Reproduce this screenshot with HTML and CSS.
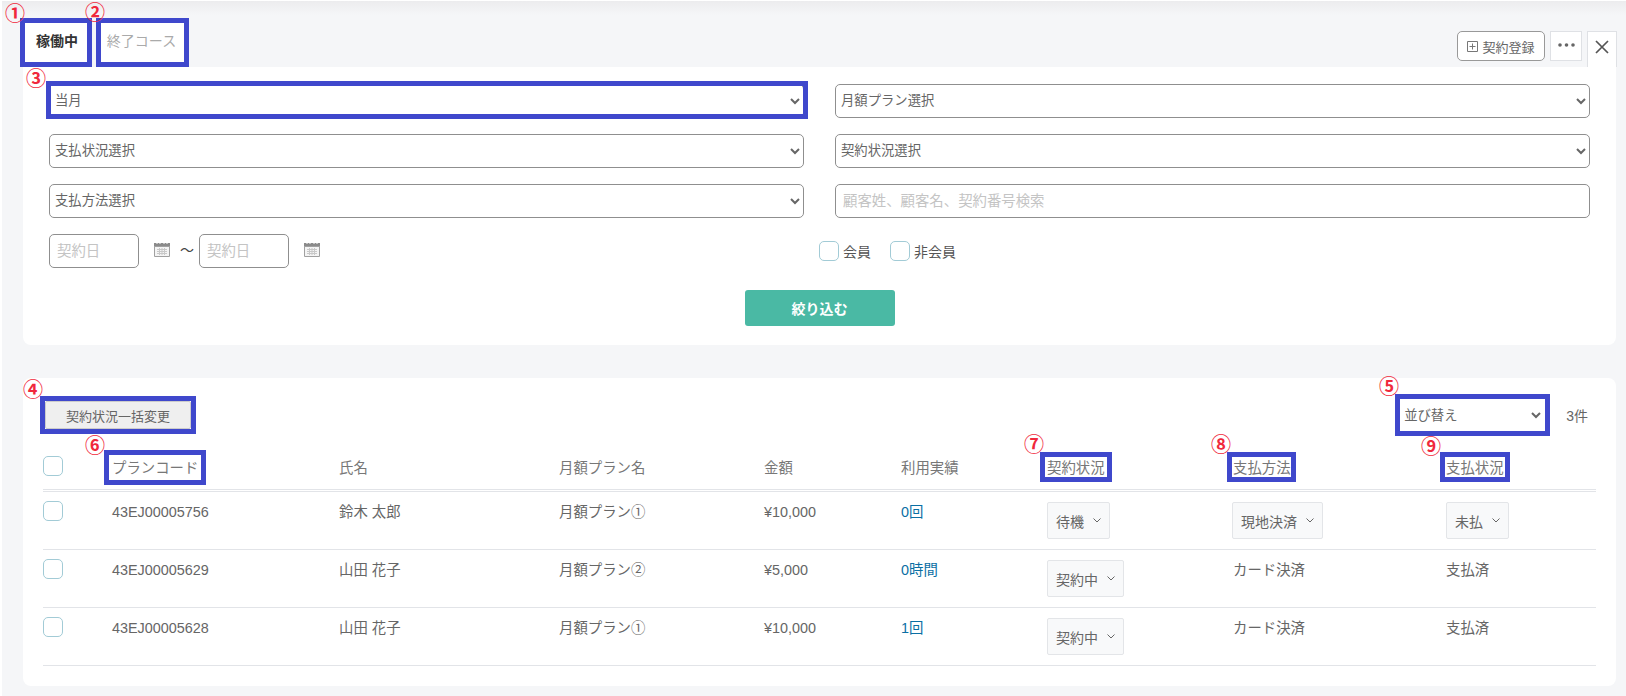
FILE: index.html
```html
<!DOCTYPE html>
<html lang="ja">
<head>
  <meta charset="UTF-8">
  <meta name="viewport" content="width=device-width, initial-scale=1.0">
  <title>月額プラン契約一覧</title>
  <link rel="stylesheet" href="styles.css">
</head>
<body>
  <div class="page">
    <!-- Tabs -->
    <div class="tab-bar">
      <div class="tab tab-active">稼働中</div>
      <div class="tab tab-off">終了コース</div>
      <div class="tab-tools">
        <button class="add-btn" type="button">
          <svg class="add-icon" width="11" height="11" viewBox="0 0 11 11"><path d="M.5.5h10v10H.5zM5.5 2.5v6M2.5 5.5h6" fill="none" stroke="#777"/></svg>
          契約登録
        </button>
        <button class="more-btn" type="button">
          <svg width="17" height="4" viewBox="0 0 17 4"><circle cx="2" cy="2" r="1.8" fill="#666"/><circle cx="8.5" cy="2" r="1.8" fill="#666"/><circle cx="15" cy="2" r="1.8" fill="#666"/></svg>
        </button>
        <button class="close-tab" type="button">
          <svg width="14" height="14" viewBox="0 0 14 14"><path d="M1 1l12 12M13 1L1 13" fill="none" stroke="#555" stroke-width="1.7"/></svg>
        </button>
      </div>
    </div>

    <!-- Filters -->
    <div class="panel filter-panel">
      <div class="filter-grid">
        <select class="field"><option>当月</option></select>
        <select class="field"><option>月額プラン選択</option></select>
        <select class="field"><option>支払状況選択</option></select>
        <select class="field"><option>契約状況選択</option></select>
        <select class="field"><option>支払方法選択</option></select>
        <input class="field search-field" type="text" placeholder="顧客姓、顧客名、契約番号検索">
        <div class="date-range">
          <input class="field date-field" type="text" placeholder="契約日">
          <svg class="cal-icon" width="16" height="15" viewBox="0 0 16 15"><path d="M0 1h16v4H0z" fill="#8a8a8a"/><path d="M.5 4.5h15v10H.5z" fill="#f4f4f4" stroke="#a0a0a0"/><path d="M3 7.5h10M3 9.5h10M3 11.5h10M5.5 6v7M8 6v7M10.5 6v7" stroke="#c8c8c8" fill="none"/><path d="M3 0v2M6 0v2M10 0v2M13 0v2" stroke="#fff" fill="none"/></svg>
          <span class="tilde">〜</span>
          <input class="field date-field" type="text" placeholder="契約日">
          <svg class="cal-icon" width="16" height="15" viewBox="0 0 16 15"><path d="M0 1h16v4H0z" fill="#8a8a8a"/><path d="M.5 4.5h15v10H.5z" fill="#f4f4f4" stroke="#a0a0a0"/><path d="M3 7.5h10M3 9.5h10M3 11.5h10M5.5 6v7M8 6v7M10.5 6v7" stroke="#c8c8c8" fill="none"/><path d="M3 0v2M6 0v2M10 0v2M13 0v2" stroke="#fff" fill="none"/></svg>
        </div>
        <div class="member-checks">
          <label class="check-label"><input class="check" type="checkbox">会員</label>
          <label class="check-label"><input class="check" type="checkbox">非会員</label>
        </div>
      </div>
      <button class="apply-btn" type="button">絞り込む</button>
    </div>

    <!-- Contract list -->
    <div class="panel list-panel">
      <div class="list-toolbar">
        <button class="bulk-btn" type="button">契約状況一括変更</button>
        <select class="sort-select"><option>並び替え</option></select>
        <span class="count">3件</span>
      </div>
      <table class="contract-table">
        <colgroup>
          <col class="c-check"><col class="c-code"><col class="c-name"><col class="c-plan"><col class="c-price">
          <col class="c-usage"><col class="c-status"><col class="c-method"><col class="c-pay">
        </colgroup>
        <thead>
          <tr>
            <th><input class="check" type="checkbox"></th>
            <th>プランコード</th>
            <th>氏名</th>
            <th>月額プラン名</th>
            <th>金額</th>
            <th>利用実績</th>
            <th>契約状況</th>
            <th>支払方法</th>
            <th>支払状況</th>
          </tr>
        </thead>
        <tbody>
          <tr>
            <td class="check-cell"><input class="check" type="checkbox"></td>
            <td>43EJ00005756</td>
            <td>鈴木 太郎</td>
            <td>月額プラン①</td>
            <td>¥10,000</td>
            <td class="usage">0回</td>
            <td><button class="drop" type="button">待機<svg width="8" height="5" viewBox="0 0 8 5"><path d="M.5.5L4 4 7.5.5" fill="none" stroke="#666"/></svg></button></td>
            <td><button class="drop drop-left" type="button">現地決済<svg width="8" height="5" viewBox="0 0 8 5"><path d="M.5.5L4 4 7.5.5" fill="none" stroke="#666"/></svg></button></td>
            <td><button class="drop" type="button">未払<svg width="8" height="5" viewBox="0 0 8 5"><path d="M.5.5L4 4 7.5.5" fill="none" stroke="#666"/></svg></button></td>
          </tr>
          <tr>
            <td class="check-cell"><input class="check" type="checkbox"></td>
            <td>43EJ00005629</td>
            <td>山田 花子</td>
            <td>月額プラン②</td>
            <td>¥5,000</td>
            <td class="usage">0時間</td>
            <td><button class="drop" type="button">契約中<svg width="8" height="5" viewBox="0 0 8 5"><path d="M.5.5L4 4 7.5.5" fill="none" stroke="#666"/></svg></button></td>
            <td>カード決済</td>
            <td>支払済</td>
          </tr>
          <tr>
            <td class="check-cell"><input class="check" type="checkbox"></td>
            <td>43EJ00005628</td>
            <td>山田 花子</td>
            <td>月額プラン①</td>
            <td>¥10,000</td>
            <td class="usage">1回</td>
            <td><button class="drop" type="button">契約中<svg width="8" height="5" viewBox="0 0 8 5"><path d="M.5.5L4 4 7.5.5" fill="none" stroke="#666"/></svg></button></td>
            <td>カード決済</td>
            <td>支払済</td>
          </tr>
        </tbody>
      </table>
    </div>
  </div>

  <!-- Manual annotations drawn over the screen -->
  <div class="frame f-1"></div>
  <div class="frame f-2"></div>
  <div class="frame f-3"></div>
  <div class="frame f-4"></div>
  <div class="frame f-5"></div>
  <div class="frame f-6"></div>
  <div class="frame f-7"></div>
  <div class="frame f-8"></div>
  <div class="frame f-9"></div>
  <span class="num n-1">①</span>
  <span class="num n-2">②</span>
  <span class="num n-3">③</span>
  <span class="num n-4">④</span>
  <span class="num n-5">⑤</span>
  <span class="num n-6">⑥</span>
  <span class="num n-7">⑦</span>
  <span class="num n-8">⑧</span>
  <span class="num n-9">⑨</span>
</body>
</html>
```

FILE: styles.css
```css
* {
  box-sizing: border-box;
}

body {
  margin: 0;
  padding: 1px 0 0 2px;
  height: 696px;
  overflow: hidden;
  background-color: #fff;
  color: #666;
  font-family: "Liberation Sans", "Noto Sans CJK JP", sans-serif;
  font-size: 14px;
}

.page {
  height: 695px;
  padding: 0 10px 0 21px;
  background: linear-gradient(#ececee, #f5f6f8 14px);
}

/* Tabs */
.tab-bar {
  display: flex;
  align-items: flex-end;
  height: 66px;
}

.tab {
  display: flex;
  align-items: center;
  justify-content: center;
  height: 39px;
  margin-bottom: 5px;
  padding-bottom: 6px;
  background-color: #fff;
}

.tab-active {
  width: 62px;
  margin-left: 2px;
  padding-left: 2px;
  color: #333;
  font-weight: 700;
}

.tab-off {
  width: 83px;
  margin-left: 14px;
  padding-right: 2px;
  color: #aaa;
}

.tab-tools {
  display: flex;
  align-items: flex-start;
  gap: 5px;
  margin-left: auto;
  margin-right: -1px;
  height: 36px;
}

.add-btn {
  display: flex;
  align-items: center;
  justify-content: center;
  gap: 4px;
  width: 88px;
  height: 30px;
  padding: 0;
  border: 1px solid #999;
  border-radius: 5px;
  background-color: #fff;
  color: #666;
  font-family: inherit;
  font-size: 13px;
}

.more-btn {
  display: flex;
  align-items: center;
  justify-content: center;
  width: 32px;
  height: 30px;
  padding: 0 0 2px;
  border: 1px solid #dfe1e5;
  background-color: #fff;
}

.close-tab {
  display: flex;
  align-items: flex-start;
  justify-content: center;
  width: 30px;
  height: 36px;
  padding: 8px 0 0;
  border: 1px solid #dfe1e5;
  border-bottom: 0;
  background-color: #fff;
}

/* Panels */
.panel {
  background-color: #fff;
  border-radius: 8px;
}

.filter-panel {
  height: 278px;
  padding: 17px 26px 0;
  border-top-left-radius: 0;
  border-top-right-radius: 0;
}

.filter-grid {
  display: grid;
  grid-template-columns: 755px 755px;
  grid-auto-rows: 34px;
  gap: 16px 31px;
}

.field {
  height: 34px;
  border: 1px solid #8f8f8f;
  border-radius: 5px;
  background-color: #fff;
  color: #666;
  font-family: inherit;
  font-size: 13.33px;
}

select.field {
  padding: 0 0 1px 1px;
}

input.field {
  padding: 0 7px 1px;
  font-size: 14.4px;
}

input.field::placeholder {
  color: #c4c4c4;
}

.date-range {
  display: flex;
  align-items: center;
}

.date-field {
  width: 90px;
}

.cal-icon {
  margin-left: 15px;
  margin-top: -3px;
}

.tilde {
  width: 29px;
  margin-top: -3px;
  padding-left: 10px;
  color: #444;
  line-height: 20px;
}

.member-checks {
  display: flex;
  align-items: center;
  gap: 19px;
  margin-left: -16px;
}

.check-label {
  display: flex;
  align-items: center;
  gap: 4px;
  color: #555;
  font-size: 14px;
}

.check {
  appearance: none;
  display: block;
  width: 20px;
  height: 20px;
  margin: 0;
  border: 1px solid #a2cbd6;
  border-radius: 5px;
  background-color: #fff;
}

.apply-btn {
  display: block;
  width: 150px;
  height: 36px;
  margin: 22px auto 0;
  border: 0;
  border-radius: 3px;
  background-color: #4ab9a4;
  color: #fff;
  font-family: inherit;
  font-size: 14px;
  font-weight: 700;
}

.list-panel {
  height: 308px;
  margin-top: 33px;
  padding: 21px 20px 0;
}

.list-toolbar {
  display: flex;
  align-items: center;
  height: 32px;
  padding: 0 8px 0 2px;
  margin-bottom: 15px;
}

.bulk-btn {
  width: 146px;
  height: 28px;
  padding: 0;
  border: 1px solid #ccc;
  border-radius: 2px;
  background-color: #efefef;
  color: #666;
  font-family: inherit;
  font-size: 13px;
}

.sort-select {
  width: 145px;
  height: 32px;
  margin-left: auto;
  padding-left: 1px;
  border: 0;
  background-color: #fff;
  color: #666;
  font-family: inherit;
  font-size: 13.33px;
}

.count {
  margin-left: 22px;
  color: #666;
}

/* Table */
.contract-table {
  width: 1553px;
  table-layout: fixed;
  border-collapse: separate;
  border-spacing: 0;
  font-size: 14.4px;
}

.c-check { width: 69px; }
.c-code { width: 227px; }
.c-name { width: 220px; }
.c-plan { width: 205px; }
.c-price { width: 137px; }
.c-usage { width: 146px; }
.c-status { width: 186px; }
.c-method { width: 213px; }
.c-pay { width: 150px; }

.contract-table th {
  height: 46px;
  padding: 0 0 3px;
  border-bottom: 3px double #e2e4e8;
  color: #777;
  font-weight: 400;
  text-align: left;
  vertical-align: middle;
}

.contract-table td {
  height: 58px;
  padding: 10px 0 0;
  border-bottom: 1px solid #e2e4e8;
  line-height: 20px;
  vertical-align: top;
}

.contract-table td.check-cell {
  padding-top: 9px;
}

.contract-table td.usage {
  color: #0b6fa4;
}

.drop {
  display: inline-flex;
  align-items: center;
  gap: 9px;
  height: 37px;
  padding: 0 8px;
  border: 1px solid #e3e5e8;
  border-radius: 2px;
  background-color: #f8f9fa;
  color: #666;
  font-family: inherit;
  font-size: 14px;
  vertical-align: top;
}

.drop-left {
  margin-left: -1px;
}

/* Annotations */
.frame {
  position: absolute;
  border: 5px solid #3f48cc;
  pointer-events: none;
}

.f-1 { left: 20px; top: 18px; width: 72px; height: 49px; }
.f-2 { left: 96px; top: 18px; width: 93px; height: 49px; }
.f-3 { left: 46px; top: 81px; width: 762px; height: 38px; }
.f-4 { left: 40px; top: 396px; width: 156px; height: 38px; }
.f-5 { left: 1395px; top: 394px; width: 155px; height: 42px; }
.f-6 { left: 104px; top: 450px; width: 102px; height: 35px; }
.f-7 { left: 1040px; top: 452px; width: 72px; height: 30px; }
.f-8 { left: 1227px; top: 452px; width: 69px; height: 30px; }
.f-9 { left: 1440px; top: 452px; width: 70px; height: 30px; }

.num {
  position: absolute;
  width: 24px;
  color: #f0283c;
  font-family: "Noto Sans CJK JP", sans-serif;
  font-size: 20px;
  font-weight: 700;
  line-height: 24px;
  text-align: center;
}

.n-1 { left: 3px; top: 1px; }
.n-2 { left: 83px; top: 0; }
.n-3 { left: 24px; top: 66px; }
.n-4 { left: 21px; top: 377px; }
.n-5 { left: 1377px; top: 374px; }
.n-6 { left: 83px; top: 433px; }
.n-7 { left: 1022px; top: 432px; }
.n-8 { left: 1209px; top: 432px; }
.n-9 { left: 1419px; top: 434px; }
```
